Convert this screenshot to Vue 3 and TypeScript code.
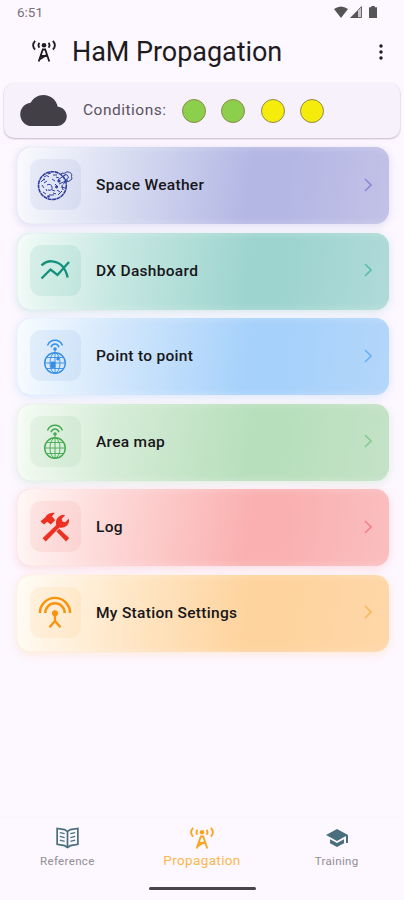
<script setup lang="ts">
interface MenuItem {
  label: string
  icon: string
  ink: string
  start: string
  early: string
  main: string
  end: string
  tile: string
  arrow: string
}

const items: MenuItem[] = [
  { label: 'Space Weather', icon: 'moon', ink: '#303f9f', start: '#fafafe', early: '#dadff2', main: '#b4b7e4', end: '#c2c1e7', tile: 'rgba(63,81,181,.07)', arrow: '#8c8ad0' },
  { label: 'DX Dashboard', icon: 'chart', ink: '#13917c', start: '#f3fbf7', early: '#c8e8e2', main: '#9dd4cf', end: '#b0dad9', tile: 'rgba(0,150,120,.09)', arrow: '#5bbba9' },
  { label: 'Point to point', icon: 'globe', ink: '#348fe5', start: '#f8fcff', early: '#d3e7fc', main: '#a6d1fb', end: '#b4d6fa', tile: 'rgba(33,120,210,.08)', arrow: '#6cb2f2' },
  { label: 'Area map', icon: 'globe', ink: '#43a951', start: '#f6fcf4', early: '#d5ecd7', main: '#b8dfbc', end: '#c4e2c7', tile: 'rgba(60,150,70,.07)', arrow: '#86cb91' },
  { label: 'Log', icon: 'tools', ink: '#ee3022', start: '#fff7f5', early: '#fdd7d6', main: '#fab0b0', end: '#fabebf', tile: 'rgba(235,60,60,.08)', arrow: '#f5808b' },
  { label: 'My Station Settings', icon: 'station', ink: '#fa920b', start: '#fffcf5', early: '#ffe9cc', main: '#fed39d', end: '#fed7a9', tile: 'rgba(250,150,30,.08)', arrow: '#f4b95a' },
]

const conditions: string[] = ['#8ccf4c', '#8ccf4c', '#f6ec0b', '#f6ec0b']
</script>

<template>
  <div class="screen">
    <div class="status">
      <span class="time">6:51</span>
      <svg class="wifi" viewBox="0 0 14 12"><path d="M0 3Q7-2 14 3L7 12Z" /></svg>
      <svg class="signal" viewBox="0 0 12 12"><path d="M0 12 12 0V12Z" opacity=".3" /><path d="M0 12 8 4V12Z" /><path d="M8 4 11.5.7V11.5H8" fill="none" stroke="#666" /></svg>
      <svg class="battery" viewBox="0 0 8 12"><path d="M2.3 0h3.4v1.3H8V12H0V1.3h2.3Z" /></svg>
    </div>

    <header class="header">
      <svg class="tower" viewBox="0 0 24 22">
        <g fill="none" stroke="currentColor" stroke-width="1.8">
          <path d="M3.1.8Q-.9 5.2 3.1 9.7M20.9.8Q24.9 5.2 20.9 9.7M7.5 2.8Q5.4 5.2 7.5 7.6M16.5 2.8Q18.6 5.2 16.5 7.6" />
          <path d="M6.7 21.5 10.8 9.5h2.4l4.1 12M9 16h6M7.5 19.5 14.5 15" />
        </g><circle cx="12" cy="5.2" r="2.3" fill="currentColor" />
      </svg>
      <h1>HaM Propagation</h1>
      <svg class="more" viewBox="0 0 4 16"><circle cx="2" cy="2" r="1.7" /><circle cx="2" cy="8" r="1.7" /><circle cx="2" cy="14" r="1.7" /></svg>
    </header>

    <section class="conditions">
      <svg class="cloud" viewBox="0 4 24 16"><path d="M19.35 10.04C18.67 6.59 15.64 4 12 4 9.11 4 6.6 5.64 5.35 8.04 2.34 8.36 0 10.91 0 14c0 3.31 2.69 6 6 6h13c2.76 0 5-2.24 5-5 0-2.64-2.05-4.78-4.65-4.96z" /></svg>
      <span class="caption">Conditions:</span>
      <div class="dots"><i v-for="(color, n) in conditions" :key="n" :style="{ background: color }"></i></div>
    </section>

    <main class="menu">
      <div
        v-for="item in items" :key="item.label" class="card"
        :style="{ '--start': item.start, '--early': item.early, '--main': item.main, '--end': item.end, '--tile': item.tile, '--ink': item.ink, '--arrow': item.arrow }"
      >
        <div class="tile">
          <svg v-if="item.icon === 'moon'" class="icon" viewBox="0 0 36 36" fill="none" stroke="currentColor">
            <circle cx="15.4" cy="18.6" r="13.9" stroke-width="1.6" stroke-dasharray="4 .5" />
            <path stroke-width="1" d="M24 7.5Q24.5 4.8 27 6.5L30 4.8Q36 5.5 34.5 9.5L35 12Q32 15.5 28.5 14.5L26 17.5M21 13 29 7M22 17 31 13M27 11a2.2 2.2 0 1 0 4-1.8 2.2 2.2 0 1 0-4 1.8M7 10q3-3 5 0M16 8h4M10 14l-3 2M15 12l3 2M5 18l2 3M10 18q4-2 5 2t-4 3M18 17l3 3M6 25l3 2M12 28h5M20 23l3 2M15 23l3 1M24 20l4 1M21 28l4-4M9 22l1 2M19 10l3 1M11 7l3-1M4 15l2-2M16 26l3 1M25 18l1 5" />
            <g fill="currentColor" stroke="none"><circle cx="19.5" cy="20" r="1.4" /><circle cx="11.5" cy="29.5" r="1.3" /><circle cx="7" cy="12.5" r="1" /><circle cx="22" cy="14" r="1.6" /></g>
          </svg>
          <svg v-else-if="item.icon === 'chart'" class="icon" viewBox="0 0 36 36" fill="none" stroke="currentColor" stroke-width="2.3">
            <path d="M4.5 13.5Q9 8.8 15 9.3C23 10 28.5 15.5 30.7 25.5M4.5 26.5 13.5 17.5 20.5 23 32 10" />
          </svg>
          <svg v-else-if="item.icon === 'globe'" class="icon" viewBox="0 0 36 36" fill="none" stroke="currentColor" stroke-width=".9">
            <circle cx="18" cy="25" r="10.3" stroke-width="1.4" />
            <ellipse cx="18" cy="25" rx="5" ry="10" /><path d="M18 11v24M8 25h20M10 19.5h16M10 30.5h16" />
            <path stroke-width="1.4" d="M10.5 7.5Q12.5 2.3 18 2.3T25.5 7.5M14 9.2Q15 6 18 6T22 9.2" />
            <circle cx="18" cy="11" r="1.8" fill="currentColor" stroke="none" />
            <path v-if="item.label === 'Point to point'" d="M14 24h4v5.5h-4zM20 19h1.5v3H20z" fill="currentColor" />
          </svg>
          <svg v-else-if="item.icon === 'tools'" class="icon" viewBox="0 0 36 36" fill="currentColor">
            <path d="M4 13 3.7 12 8.2 8.6 9.5 6.2Q13 2.8 17.8 4L15 7.3 18.2 11.2 13.7 15.5 10.2 12.7 7.2 15.4ZM22.2 19.8 32.2 29 29 32.5 19.5 22.6Z" />
            <path d="M5.5 29.2 19.3 16Q17.8 10.8 22 7.5 25 5 28.2 6.2L24.7 9.7 25.4 12.5 28.2 13.2 31.8 9.6Q32.7 14.4 29.5 17 26.2 19.3 22.4 18.5L8.8 32.4Z" />
          </svg>
          <svg v-else class="icon" viewBox="0 0 36 36" fill="none" stroke="currentColor" stroke-width="2.4">
            <path d="M2.9 19a15.1 15.1 0 0 1 30.2 0M8.3 19a9.7 9.7 0 0 1 19.4 0M18 19v8M12.5 33.3 18 27l5.5 6.3" /><circle cx="18" cy="19.3" r="3" fill="currentColor" stroke="none" />
          </svg>
        </div>
        <span class="label">{{ item.label }}</span>
        <svg class="arrow" viewBox="0 0 8 14"><path d="m1 1 6 6-6 6" fill="none" stroke="currentColor" stroke-width="1.6" /></svg>
      </div>
    </main>

    <nav class="nav">
      <div class="tab">
        <svg class="book" viewBox="0 0 24 22" fill="none" stroke="currentColor" stroke-width="1.8">
          <path d="M12 4.2 9 2.2 1.2 1v16.5L9 19l3 2 3-2 7.8-1.5V1L15 2.2ZM12 4.2V21" /><path stroke-width="1.3" d="m4 5.3 5 1.2M4 9.3l5 1.2M4 13.3l5 1.2M20 5.3l-5 1.2M20 9.3l-5 1.2M20 13.3l-5 1.2" />
        </svg><span>Reference</span>
      </div>
      <div class="tab active">
        <svg class="tower" viewBox="0 0 24 22">
          <g fill="none" stroke="currentColor" stroke-width="1.8">
            <path d="M3.1.8Q-.9 5.2 3.1 9.7M20.9.8Q24.9 5.2 20.9 9.7M7.5 2.8Q5.4 5.2 7.5 7.6M16.5 2.8Q18.6 5.2 16.5 7.6" />
            <path d="M6.7 21.5 10.8 9.5h2.4l4.1 12M9 16h6M7.5 19.5 14.5 15" />
          </g><circle cx="12" cy="5.2" r="2.3" fill="currentColor" />
        </svg><span>Propagation</span>
      </div>
      <div class="tab">
        <svg class="cap" viewBox="1 3 22 18" fill="currentColor"><path d="M5 13.18v4L12 21l7-3.82v-4L12 17l-7-3.82zM12 3 1 9l11 6 9-4.91V17h2V9L12 3z" /></svg><span>Training</span>
      </div>
    </nav>
    <div class="handle"></div>
  </div>
</template>

<style>
body { background: #fdf7ff; }
</style>

<style scoped>
.screen {
  box-sizing: border-box;
  width: 404px;
  height: 900px;
  overflow: hidden;
  display: flex;
  flex-direction: column;
  background: #fdf7ff;
  font-family: Roboto, "Liberation Sans", sans-serif;
}
svg { display: block; flex: none; }
.status { height: 24px; flex: none; display: flex; align-items: center; padding: 0 27px 0 17px; box-sizing: border-box; fill: #555; }
.time { margin-right: auto; font-size: 13.5px; letter-spacing: 0; color: #77737a; }
.wifi { width: 14px; height: 12px; }
.signal { width: 12px; height: 12px; margin-left: 2px; }
.battery { width: 8px; height: 12px; margin-left: 7px; }
.header { height: 59px; flex: none; display: flex; align-items: center; padding: 0 21px 4px 32px; box-sizing: border-box; color: #1d1b20; }
.tower { width: 24px; height: 22px; }
.header .tower { margin-top: -1px; }
h1 { margin: 0 auto 0 16px; font-size: 27px; line-height: 34px; font-weight: 400; letter-spacing: -.05px; white-space: nowrap; }
.more { width: 4px; height: 16px; fill: #1d1b20; }
.conditions {
  width: 396px; height: 55px; flex: none; margin-left: 4px; padding-left: 16px;
  box-sizing: border-box; display: flex; align-items: center;
  border-radius: 10px; background: #f7f1fb;
  box-shadow: 0 1px 2px rgba(40, 25, 50, .27), 0 0 2px rgba(40, 25, 50, .06);
}
.cloud { width: 47px; height: 31px; fill: #424046; }
.caption { width: 99px; margin: 0 0 1px 16px; font-size: 15.5px; letter-spacing: .5px; color: #59545e; white-space: nowrap; }
.dots { display: flex; gap: 15.4px; }
.dots i { width: 24px; height: 24px; box-sizing: border-box; border: 1px solid #8e8b50; border-radius: 50%; }
.menu { display: flex; flex-direction: column; gap: 8.6px; margin: 9px 15px 0 17px; }
.card {
  height: 77px; box-sizing: border-box; padding: 0 17px 2px 12.5px; display: flex; align-items: center;
  border-radius: 14px;
  background: linear-gradient(98deg, var(--start) 0%, var(--early) 26%, var(--main) 62%, var(--main) 72%, var(--end) 100%);
  box-shadow: 0 2px 9px color-mix(in srgb, var(--main) 42%, transparent), inset 0 0 1px var(--main), inset 5px 0 9px rgba(255, 255, 255, .3);
}
.tile { width: 51px; height: 51px; flex: none; display: grid; place-items: center; border-radius: 11px; background: var(--tile); color: var(--ink); }
.icon { width: 36px; height: 36px; margin-right: 1px; }
.label { margin: 1px auto 0 15.5px; font-size: 15.5px; line-height: 20px; font-weight: 500; letter-spacing: .3px; color: #17161a; white-space: nowrap; }
.arrow { width: 8px; height: 14px; color: var(--arrow); }
.nav { height: 69px; flex: none; display: grid; grid-template-columns: repeat(3, 1fr); margin-top: auto; box-shadow: 0 -1px 2px rgba(60, 40, 70, .025); }
.tab { display: flex; flex-direction: column; align-items: center; padding-top: 9px; color: #496f7d; }
.tab span { margin-top: 4px; font-size: 11.5px; line-height: 16px; letter-spacing: .35px; color: #918e95; }
.tab.active { color: #faa51b; }
.tab.active span { margin-top: 3px; font-size: 13.5px; letter-spacing: .37px; color: #fbb84e; }
.book { width: 23px; height: 22px; }
.cap { width: 22px; height: 18px; margin: 2px 0; }
.handle { width: 107px; height: 3px; flex: none; margin: 0 auto 10px; border-radius: 2px; background: #48444b; }
</style>
